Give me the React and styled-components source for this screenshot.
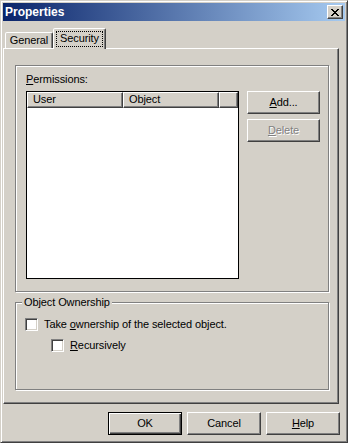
import React from "react";
import styled, { createGlobalStyle } from "styled-components";

const GlobalStyle = createGlobalStyle`
  html, body {
    margin: 0;
    padding: 0;
    background: #d4d0c8;
  }
  body {
    font-family: "Liberation Sans", Arial, sans-serif;
    font-size: 11px;
    letter-spacing: -0.1px;
    color: #000;
  }
`;

const Window = styled.div`
  width: 348px;
  height: 443px;
  box-sizing: border-box;
  background: #d4d0c8;
  border: 1px solid;
  border-color: #d4d0c8 #404040 #404040 #d4d0c8;
  box-shadow: inset 1px 1px #fff, inset -1px -1px #808080;
  padding: 2px;
  display: flex;
  flex-direction: column;
`;

const TitleBar = styled.div`
  height: 18px;
  flex: none;
  display: flex;
  align-items: center;
  justify-content: space-between;
  padding: 0 2px 0 2px;
  background: linear-gradient(to right, #0a246a, #a6caf0);
`;

const Title = styled.span`
  color: #fff;
  font-weight: bold;
  font-size: 12px;
  letter-spacing: 0;
  line-height: 14px;
`;

const CloseButton = styled.button`
  width: 16px;
  height: 14px;
  box-sizing: border-box;
  padding: 0;
  margin: 0;
  background: #d4d0c8;
  border: 1px solid;
  border-color: #fff #404040 #404040 #fff;
  box-shadow: inset -1px -1px #808080;
  display: flex;
  align-items: center;
  justify-content: center;
`;

const TabRow = styled.div`
  margin-top: 7px;
  height: 20px;
  display: flex;
  align-items: flex-end;
  padding-left: 2px;
  flex: none;
`;

const Tab = styled.div`
  position: relative;
  box-sizing: border-box;
  width: ${(p) => p.$width}px;
  height: ${(p) => (p.$active ? 21 : 16)}px;
  margin-bottom: ${(p) => (p.$active ? -1 : 0)}px;
  z-index: ${(p) => (p.$active ? 1 : 0)};
  background: #d4d0c8;
  border: 1px solid;
  border-bottom: none;
  border-color: #fff #404040 transparent #fff;
  border-radius: 2px 2px 0 0;
  box-shadow: inset -1px 0 #808080;
  display: flex;
  justify-content: center;
  padding-top: ${(p) => (p.$active ? 3 : 1)}px;
  line-height: 13px;
`;

const FocusLabel = styled.span`
  height: 16px;
  box-sizing: border-box;
  padding: 0 3px;
  line-height: 13px;
  border: 1px dotted #000;
  margin-top: -1px;
`;

const Panel = styled.div`
  width: 336px;
  height: 356px;
  box-sizing: border-box;
  flex: none;
  border: 1px solid;
  border-color: #fff #404040 #404040 #fff;
  box-shadow: inset -1px -1px #808080;
  padding: 16px 9px 0 11px;
  display: flex;
  flex-direction: column;
`;

const Group = styled.div`
  position: relative;
  box-sizing: border-box;
  height: ${(p) => p.$height}px;
  margin-top: ${(p) => p.$top || 0}px;
  border: 1px solid #808080;
  box-shadow: inset 1px 1px #fff, 1px 1px #fff;
  padding: ${(p) => p.$pad};
  display: flex;
  flex-direction: column;
`;

const Legend = styled.span`
  position: absolute;
  top: -7px;
  left: 6px;
  padding: 0 2px;
  background: #d4d0c8;
  line-height: 13px;
`;

const Label = styled.div`
  line-height: 13px;
  margin-bottom: 5px;
`;

const Row = styled.div`
  display: flex;
  align-items: flex-start;
`;

const ListBox = styled.div`
  width: 213px;
  height: 188px;
  box-sizing: border-box;
  border: 1px solid #000;
  background: #fff;
  display: flex;
  flex-direction: column;
`;

const HeaderRow = styled.div`
  display: flex;
  height: 16px;
  flex: none;
`;

const HeaderCell = styled.div`
  box-sizing: border-box;
  width: ${(p) => p.$width}px;
  height: 16px;
  background: #d4d0c8;
  border: 1px solid;
  border-color: #fff #404040 #404040 #fff;
  box-shadow: inset -1px -1px #808080;
  padding-left: 5px;
  line-height: 13px;
`;

const ButtonColumn = styled.div`
  display: flex;
  flex-direction: column;
  gap: 5px;
  margin-left: 8px;
`;

const Button = styled.button`
  width: ${(p) => p.$width || 74}px;
  height: 23px;
  box-sizing: border-box;
  margin: 0;
  padding: 0;
  font-family: "Liberation Sans", Arial, sans-serif;
  font-size: 11px;
  letter-spacing: -0.1px;
  line-height: 13px;
  background: #d4d0c8;
  color: ${(p) => (p.disabled ? "#808080" : "#000")};
  text-shadow: ${(p) => (p.disabled ? "1px 1px #fff" : "none")};
  border: 1px solid;
  border-color: ${(p) =>
    p.$default ? "#000" : "#fff #404040 #404040 #fff"};
  box-shadow: ${(p) =>
    p.$default
      ? "inset 1px 1px #fff, inset -1px -1px #404040, inset -2px -2px #808080"
      : "inset -1px -1px #808080"};
`;

const Key = styled.span`
  text-decoration: underline;
  text-underline-offset: 1px;
`;

const CheckRow = styled.label`
  display: flex;
  align-items: center;
  height: 13px;
  margin-left: ${(p) => p.$indent || 0}px;
  margin-bottom: 8px;
  gap: 6px;
  line-height: 13px;
`;

const CheckBox = styled.span`
  width: 13px;
  height: 13px;
  box-sizing: border-box;
  flex: none;
  background: #fff;
  border: 1px solid;
  border-color: #808080 #fff #fff #808080;
  box-shadow: inset 1px 1px #404040, inset -1px -1px #d4d0c8;
`;

const Footer = styled.div`
  display: flex;
  justify-content: flex-end;
  gap: 5px;
  margin-top: 8px;
  padding-right: 5px;
`;

function CloseGlyph() {
  const rows = [
    "11....11",
    ".11..11.",
    "..1111..",
    "...11...",
    "..1111..",
    ".11..11.",
    "11....11",
  ];
  return (
    <svg width="8" height="7" viewBox="0 0 8 7" shapeRendering="crispEdges">
      {rows.map((r, y) =>
        r.split("").map((c, x) =>
          c === "1" ? <rect key={`${x}-${y}`} x={x} y={y} width="1" height="1" fill="#000" /> : null
        )
      )}
    </svg>
  );
}

export default function App() {
  return (
    <>
      <GlobalStyle />
      <Window>
        <TitleBar>
          <Title>Properties</Title>
          <CloseButton>
            <CloseGlyph />
          </CloseButton>
        </TitleBar>

        <TabRow>
          <Tab $width={48}>General</Tab>
          <Tab $width={53} $active>
            <FocusLabel>Security</FocusLabel>
          </Tab>
        </TabRow>

        <Panel>
          <Group $height={227} $pad="7px 0 0 10px">
            <Label>
              <Key>P</Key>ermissions:
            </Label>
            <Row>
              <ListBox>
                <HeaderRow>
                  <HeaderCell $width={96}>User</HeaderCell>
                  <HeaderCell $width={96}>Object</HeaderCell>
                  <HeaderCell $width={19} />
                </HeaderRow>
              </ListBox>
              <ButtonColumn>
                <Button $width={73}>
                  <Key>A</Key>dd...
                </Button>
                <Button $width={73} disabled>
                  <Key>D</Key>elete
                </Button>
              </ButtonColumn>
            </Row>
          </Group>

          <Group $height={88} $top={10} $pad="15px 0 0 9px">
            <Legend>Object Ownership</Legend>
            <CheckRow>
              <CheckBox />
              <span>
                Take <Key>o</Key>wnership of the selected object.
              </span>
            </CheckRow>
            <CheckRow $indent={26}>
              <CheckBox />
              <span>
                <Key>R</Key>ecursively
              </span>
            </CheckRow>
          </Group>
        </Panel>

        <Footer>
          <Button $default>OK</Button>
          <Button>Cancel</Button>
          <Button>
            <Key>H</Key>elp
          </Button>
        </Footer>
      </Window>
    </>
  );
}
